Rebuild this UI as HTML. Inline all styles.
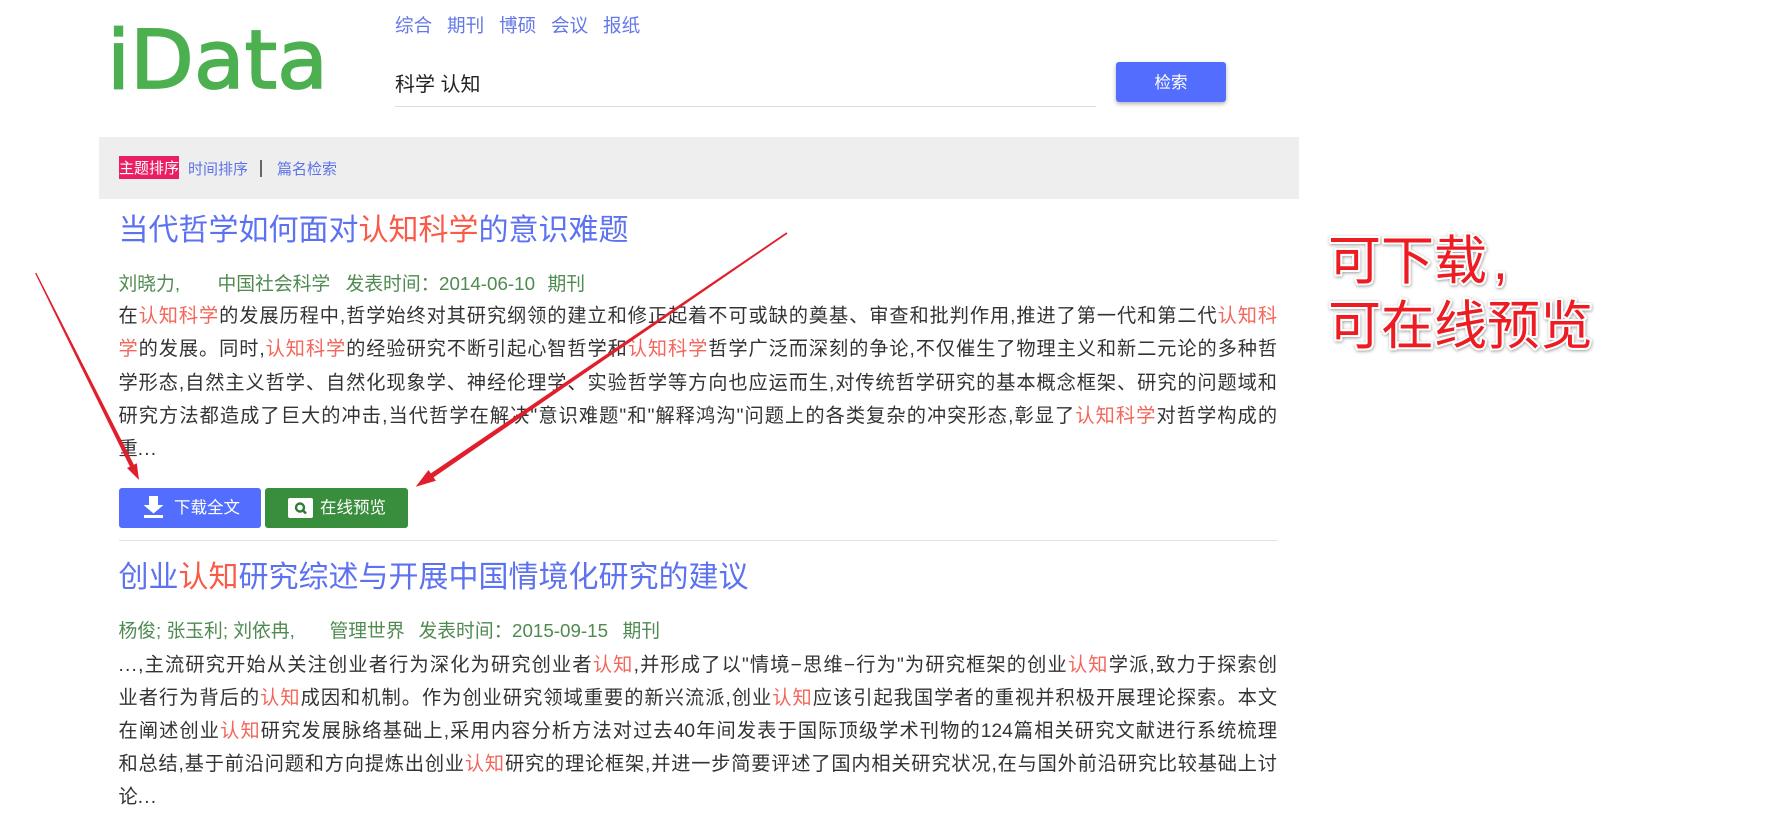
<!DOCTYPE html>
<html lang="zh">
<head>
<meta charset="utf-8">
<title>iData</title>
<style>
html,body{margin:0;padding:0;background:#fff;width:1783px;height:820px;overflow:hidden}
body{position:relative;font-family:"Liberation Sans","Noto Sans CJK SC",sans-serif;color:#333}
.a{position:absolute;white-space:nowrap}
.nav{top:13px;font-size:18.6px;line-height:26px;color:#6478e8}
.r{color:#f4655a}
.t{left:118.5px;font-size:30px;line-height:40px;color:#5c72f0}
.t .r{color:#fb5a48}
.m{left:118.5px;font-size:18.8px;line-height:26px;color:#4f8a50}
.b{left:118.5px;width:1158.5px;font-size:19.2px;line-height:30px;color:#333}
.j{text-align:justify;text-align-last:justify;white-space:normal}
.d{letter-spacing:1.2px}
.btn{top:488px;height:40px;border-radius:3px;color:#fff}
.btn span{position:absolute;top:1px;line-height:38px;font-size:16.5px;white-space:nowrap}
</style>
</head>
<body>
<svg class="a" style="left:100px;top:20px" width="240" height="80"><text x="7" y="68" font-family="DejaVu Sans" font-size="81" fill="#4caf50" stroke="#4caf50" stroke-width="1.8" textLength="221" lengthAdjust="spacingAndGlyphs">iData</text></svg>

<div class="a nav" style="left:395px">综合</div>
<div class="a nav" style="left:447px">期刊</div>
<div class="a nav" style="left:499px">博硕</div>
<div class="a nav" style="left:551px">会议</div>
<div class="a nav" style="left:603px">报纸</div>

<div class="a" style="left:395px;top:71px;font-size:20px;line-height:28px;color:#222">科学 认知</div>
<div class="a" style="left:395px;top:106px;width:701px;height:1px;background:#ddd"></div>
<div class="a" style="left:1116px;top:62px;width:110px;height:40px;background:#536dfe;border-radius:3px;box-shadow:0 2px 4px rgba(0,0,0,.3);color:#fff;font-size:16.5px;line-height:42px;text-align:center">检索</div>

<div class="a" style="left:99px;top:137px;width:1200px;height:62px;background:#eee"></div>
<div class="a" style="left:119px;top:156px;width:60px;height:23px;background:#e91e63;color:#fff;font-size:15px;line-height:26px;overflow:hidden">主题排序</div>
<div class="a" style="left:188px;top:158px;font-size:15px;line-height:24px;color:#5c72e8">时间排序</div>
<div class="a" style="left:260px;top:160px;width:1.5px;height:17px;background:#666"></div>
<div class="a" style="left:277px;top:158px;font-size:15px;line-height:24px;color:#5c72e8">篇名检索</div>

<div class="a t" style="top:211px">当代哲学如何面对<span class="r">认知科学</span>的意识难题</div>
<div class="a m" style="top:271px">刘晓力,<span style="position:absolute;left:99px">中国社会科学</span><span style="position:absolute;left:227px">发表时间：</span><span style="position:absolute;left:320.5px">2014-06-10</span><span style="position:absolute;left:429px">期刊</span></div>

<div class="a b j" style="top:302px">在<span class="r">认知科学</span>的发展历程中,哲学始终对其研究纲领的建立和修正起着不可或缺的奠基、审查和批判作用,推进了第一代和第二代<span class="r">认知科</span></div>
<div class="a b j" style="top:335px"><span class="r">学</span>的发展。同时,<span class="r">认知科学</span>的经验研究不断引起心智哲学和<span class="r">认知科学</span>哲学广泛而深刻的争论,不仅催生了物理主义和新二元论的多种哲</div>
<div class="a b j" style="top:369px">学形态,自然主义哲学、自然化现象学、神经伦理学、实验哲学等方向也应运而生,对传统哲学研究的基本概念框架、研究的问题域和</div>
<div class="a b j" style="top:402px">研究方法都造成了巨大的冲击,当代哲学在解决"意识难题"和"解释鸿沟"问题上的各类复杂的冲突形态,彰显了<span class="r">认知科学</span>对哲学构成的</div>
<div class="a b" style="top:435px">重<span class="d">...</span></div>

<div class="a btn" style="left:119px;width:142px;background:#536dfe">
<svg class="a" style="left:25px;top:8px" width="20" height="22" viewBox="0 0 20 22"><path d="M5 0h9v9h5.5l-10 8.5-10-8.5h5.5z" fill="#fff"/><rect x="0" y="19" width="19" height="3" fill="#fff"/></svg>
<span style="left:55px">下载全文</span>
</div>
<div class="a btn" style="left:265px;width:143px;background:#388e3c">
<svg class="a" style="left:23px;top:10px" width="25" height="20" viewBox="0 0 25 20"><rect width="25" height="20" rx="2" fill="#fff"/><circle cx="12" cy="9.5" r="4" fill="none" stroke="#2e7d32" stroke-width="2.4"/><path d="M15 12.5l3 3" stroke="#2e7d32" stroke-width="2.6"/></svg>
<span style="left:55px">在线预览</span>
</div>

<div class="a" style="left:119px;top:540px;width:1159px;height:1px;background:#e2e2e2"></div>

<div class="a t" style="top:558px">创业<span class="r">认知</span>研究综述与开展中国情境化研究的建议</div>
<div class="a m" style="top:618px">杨俊; 张玉利; 刘依冉,<span style="position:absolute;left:211px">管理世界</span><span style="position:absolute;left:300px">发表时间：</span><span style="position:absolute;left:393.5px">2015-09-15</span><span style="position:absolute;left:504px">期刊</span></div>

<div class="a b j" style="top:651px"><span class="d">...</span>,主流研究开始从关注创业者行为深化为研究创业者<span class="r">认知</span>,并形成了以"情境−思维−行为"为研究框架的创业<span class="r">认知</span>学派,致力于探索创</div>
<div class="a b j" style="top:684px">业者行为背后的<span class="r">认知</span>成因和机制。作为创业研究领域重要的新兴流派,创业<span class="r">认知</span>应该引起我国学者的重视并积极开展理论探索。本文</div>
<div class="a b j" style="top:717px">在阐述创业<span class="r">认知</span>研究发展脉络基础上,采用内容分析方法对过去40年间发表于国际顶级学术刊物的124篇相关研究文献进行系统梳理</div>
<div class="a b j" style="top:750px">和总结,基于前沿问题和方向提炼出创业<span class="r">认知</span>研究的理论框架,并进一步简要评述了国内相关研究状况,在与国外前沿研究比较基础上讨</div>
<div class="a b" style="top:783px">论<span class="d">...</span></div>

<svg class="a" style="left:0;top:0" width="1783" height="820">
<path d="M36.3 272.7 L133.9 464.7 L136.8 463.3 L139 480 L127 468 L129.9 466.6 L35.1 273.3 Z" fill="#e01f2d"/>
<path d="M787.4 233.7 L433.6 477.4 L435.9 480.8 L415.7 486.7 L428.5 470 L430.8 473.4 L786.5 232.3 Z" fill="#e01f2d"/>
<defs><filter id="s" x="-5%" y="-10%" width="110%" height="120%"><feDropShadow dx="0.5" dy="1" stdDeviation="1.5" flood-color="#000" flood-opacity=".4"/></filter></defs>
<g font-family="Liberation Sans,Noto Sans CJK SC,sans-serif" font-size="53" fill="#ed1c24" stroke="#fff" stroke-width="4" paint-order="stroke" filter="url(#s)" stroke-linejoin="round">
<text x="1328" y="279">可下载<tspan dx="6">,</tspan></text>
<text x="1328" y="344">可在线预览</text>
</g>
</svg>
</body>
</html>
